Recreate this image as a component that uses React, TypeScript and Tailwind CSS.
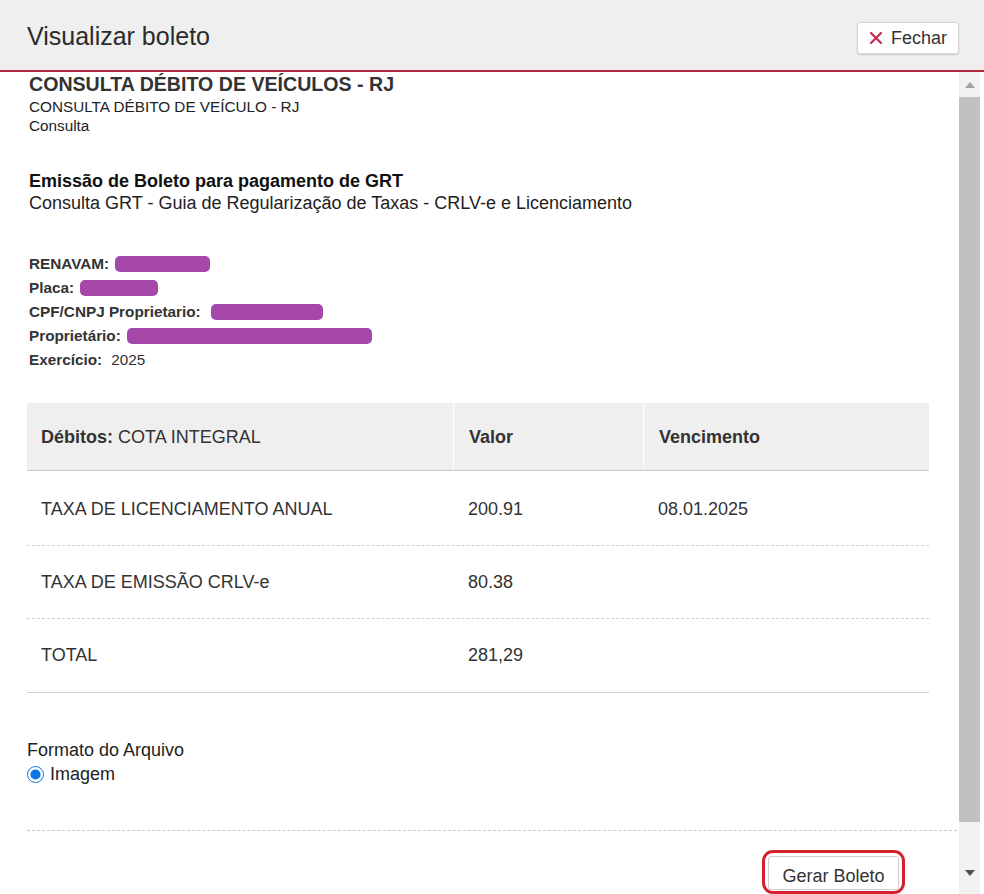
import React from "react";

const font = { fontFamily: '"Liberation Sans", Arial, sans-serif' };

function Redact({ w }: { w: number }) {
  return (
    <span
      className="inline-block h-[16px] rounded-[5px] bg-[#a548a9] align-middle ml-[6px]"
      style={{ width: w }}
    />
  );
}

export default function App() {
  return (
    <div className="w-full h-[894px] overflow-hidden bg-white flex flex-col text-[#333]" style={font}>
      {/* Header */}
      <div className="h-[72px] shrink-0 bg-[#efefef] border-b-2 border-[#b3283f] flex items-center justify-between pl-[27px] pr-[25px]">
        <h1 className="text-[25px] leading-none text-[#2b2b2b] mt-[2px]">Visualizar boleto</h1>
        <button className="h-[32px] w-[102px] mt-[6px] bg-white border border-[#d6d6d6] rounded-[3px] shadow-[0_1px_2px_rgba(0,0,0,0.15)] flex items-center justify-center gap-[8px] text-[18px] text-[#333]">
          <svg width="14" height="14" viewBox="0 0 14 14" className="shrink-0">
            <path d="M2 2 L12 12 M12 2 L2 12" stroke="#c43654" strokeWidth="2.4" strokeLinecap="round" />
          </svg>
          <span>Fechar</span>
        </button>
      </div>

      {/* Body */}
      <div className="flex flex-1 min-h-0">
        <div className="flex-1 min-w-0 pl-[27px] pr-[2px] pt-[1px]">
          <div className="pl-[2px]">
            <div className="text-[19.6px] leading-[22px] font-bold text-[#333]">CONSULTA DÉBITO DE VEÍCULOS - RJ</div>
            <div className="mt-[2px] text-[15.3px] leading-[19px] text-[#222]">CONSULTA DÉBITO DE VEÍCULO - RJ</div>
            <div className="text-[15.3px] leading-[19px] text-[#222]">Consulta</div>

            <div className="mt-[35px] text-[18px] leading-[22px] font-bold text-[#111]">Emissão de Boleto para pagamento de GRT</div>
            <div className="text-[18px] leading-[23px] text-[#222]">Consulta GRT - Guia de Regularização de Taxas - CRLV-e e Licenciamento</div>

            <div className="mt-[37px] text-[15.3px] leading-[24px] text-[#333]">
              <div className="flex items-center"><span className="font-bold">RENAVAM:</span><Redact w={95} /></div>
              <div className="flex items-center"><span className="font-bold">Placa:</span><Redact w={78} /></div>
              <div className="flex items-center"><span className="font-bold">CPF/CNPJ Proprietario:</span><span className="ml-[4px]" /><Redact w={112} /></div>
              <div className="flex items-center"><span className="font-bold">Proprietário:</span><Redact w={245} /></div>
              <div className="flex items-center"><span className="font-bold">Exercício:</span><span className="ml-[9px]">2025</span></div>
            </div>
          </div>

          {/* Table */}
          <div className="mt-[31px] w-[902px] text-[18px] text-[#333]">
            <div className="grid grid-cols-[426px_190px_286px] h-[68px] bg-[#efefef] border-b border-[#c8c8c8]">
              <div className="flex items-center pl-[14px] pt-[1px]"><span className="font-bold">Débitos:</span><span className="ml-[5px]">COTA INTEGRAL</span></div>
              <div className="flex items-center pl-[15px] pt-[1px] border-l border-white font-bold">Valor</div>
              <div className="flex items-center pl-[15px] pt-[1px] border-l border-white font-bold">Vencimento</div>
            </div>
            <div className="grid grid-cols-[426px_190px_286px] h-[75px] border-b border-dashed border-[#d0d0d0]">
              <div className="flex items-center pl-[14px] pt-[2px]">TAXA DE LICENCIAMENTO ANUAL</div>
              <div className="flex items-center pl-[15px] pt-[2px]">200.91</div>
              <div className="flex items-center pl-[15px] pt-[2px]">08.01.2025</div>
            </div>
            <div className="grid grid-cols-[426px_190px_286px] h-[73px] border-b border-dashed border-[#d0d0d0]">
              <div className="flex items-center pl-[14px]">TAXA DE EMISSÃO CRLV-e</div>
              <div className="flex items-center pl-[15px]">80.38</div>
              <div />
            </div>
            <div className="grid grid-cols-[426px_190px_286px] h-[74px] border-b border-[#cfcfcf]">
              <div className="flex items-center pl-[14px]">TOTAL</div>
              <div className="flex items-center pl-[15px]">281,29</div>
              <div />
            </div>
          </div>

          {/* Format */}
          <div className="mt-[45px] text-[18px] leading-[24px] text-[#222]">
            <div>Formato do Arquivo</div>
            <label className="flex items-center gap-[6px]">
              <input type="radio" checked readOnly className="m-0 w-[17px] h-[17px] accent-[#0b74e5]" />
              <span>Imagem</span>
            </label>
          </div>

          <div className="mt-[44px] border-t border-dashed border-[#c8c8c8]" />

          <div className="flex justify-end pr-[52px] mt-[19px]">
            <div className="border-[3px] border-[#d5212e] rounded-[11px] p-[3px] pb-[1px]">
              <button className="h-[34px] w-[131px] pt-[6px] flex items-center justify-center bg-white border border-[#cfcfcf] rounded-[3px] text-[18px] text-[#333]">
                Gerar Boleto
              </button>
            </div>
          </div>
        </div>

        {/* Scrollbar */}
        <div className="w-[21px] shrink-0 mr-[4px] bg-[#f1f1f1] flex flex-col">
          <div className="h-[25px] flex items-center justify-center">
            <svg width="10" height="6" viewBox="0 0 10 6"><path d="M0 6 L5 0 L10 6 Z" fill="#a3a3a3" /></svg>
          </div>
          <div className="h-[725px] bg-[#c1c1c1]" />
          <div className="flex-1" />
          <div className="h-[25px] mb-[9px] flex items-center justify-center">
            <svg width="10" height="6" viewBox="0 0 10 6"><path d="M0 0 L5 6 L10 0 Z" fill="#505050" /></svg>
          </div>
        </div>
      </div>
    </div>
  );
}
